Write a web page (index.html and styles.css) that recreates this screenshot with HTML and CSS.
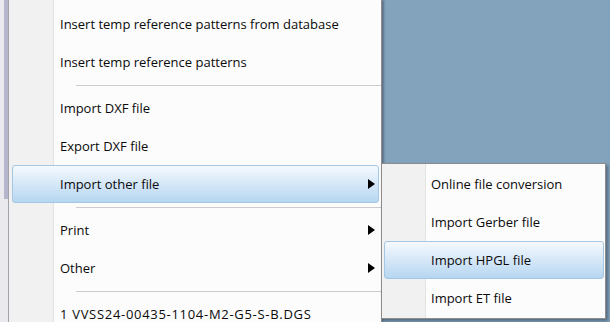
FILE: index.html
```html
<!DOCTYPE html>
<html lang="en">
<head>
    <meta charset="UTF-8">
    <meta name="viewport" content="width=device-width, initial-scale=1.0">
    <title>File menu</title>
    <link rel="stylesheet" href="styles.css">
</head>
<body>
    <div class="screen">
        <div class="scrollbar"><div class="thumb"></div></div>
        <div class="menu">
            <div class="item">Insert temp reference patterns from database</div>
            <div class="item">Insert temp reference patterns</div>
            <div class="sep"></div>
            <div class="item">Import DXF file</div>
            <div class="item">Export DXF file</div>
            <div class="item active">Import other file <span class="arrow"></span></div>
            <div class="sep"></div>
            <div class="item">Print <span class="arrow"></span></div>
            <div class="item">Other <span class="arrow"></span></div>
            <div class="sep"></div>
            <div class="item"><span class="caps">1 VVSS24-00435-1104-M2-G5-S-B.DGS</span></div>
        </div>

        <div class="submenu">
            <div class="item">Online file conversion</div>
            <div class="item">Import Gerber file</div>
            <div class="item active">Import HPGL file</div>
            <div class="item">Import ET file</div>
        </div>
    </div>
</body>
</html>
```

FILE: styles.css
```css
body {
    margin: 0;
    padding: 0;
    font-family: "Open Sans", "Noto Sans", sans-serif;
    font-size: 13px;
    color: #0a0a0a;
}
.screen {
    position: relative;
    display: flex;
    width: 610px;
    height: 322px;
    overflow: hidden;
    background-color: #83a3bd;
}
.scrollbar {
    width: 8px;
    flex-shrink: 0;
    background-color: #e9e9ee;
    border-right: 1px solid #a2a2ab;
}
.thumb {
    width: 4px;
    height: 199px;
    margin-left: 4px;
    background-color: #b5b6cb;
}
.menu {
    width: 372px;
    flex-shrink: 0;
    padding-top: 5px;
    border-right: 1px solid #8c8c8c;
    box-shadow: 2px 0 2px rgba(0, 0, 0, 0.3);
    background: linear-gradient(to right, #f1f1f1 44px, #e2e3e3 44px 45px, #fcfcfc 45px);
}
.item {
    display: flex;
    align-items: center;
    justify-content: space-between;
    height: 38px;
    box-sizing: border-box;
    margin: 0 2px 0 3px;
    padding: 0 4px 0 48px;
    white-space: nowrap;
}
.caps {
    letter-spacing: 0.7px;
}
.item.active {
    border: 1px solid #a5c7e4;
    border-radius: 3px;
    padding-left: 47px;
    padding-right: 3px;
    background: linear-gradient(#f5f9fe, #b6d6f1);
}
.arrow {
    width: 0;
    height: 0;
    border-left: 7px solid #000;
    border-top: 5px solid transparent;
    border-bottom: 5px solid transparent;
}
.sep {
    height: 8px;
    margin-left: 67px;
    background: linear-gradient(#cbcbcb, #cbcbcb) 0 4px / 100% 1px no-repeat;
}
.submenu {
    position: absolute;
    left: 381px;
    top: 163px;
    width: 225px;
    box-sizing: border-box;
    padding: 1px 0;
    border: 1px solid #8c8c8c;
    box-shadow: 2px 2px 3px rgba(0, 0, 0, 0.35);
    background: linear-gradient(to right, #f1f1f1 43px, #e2e3e3 43px 44px, #fcfcfc 44px);
}
.submenu .item {
    margin: 0 1px 0 2px;
    padding-left: 47px;
}
.submenu .item.active {
    padding-left: 46px;
}
```
